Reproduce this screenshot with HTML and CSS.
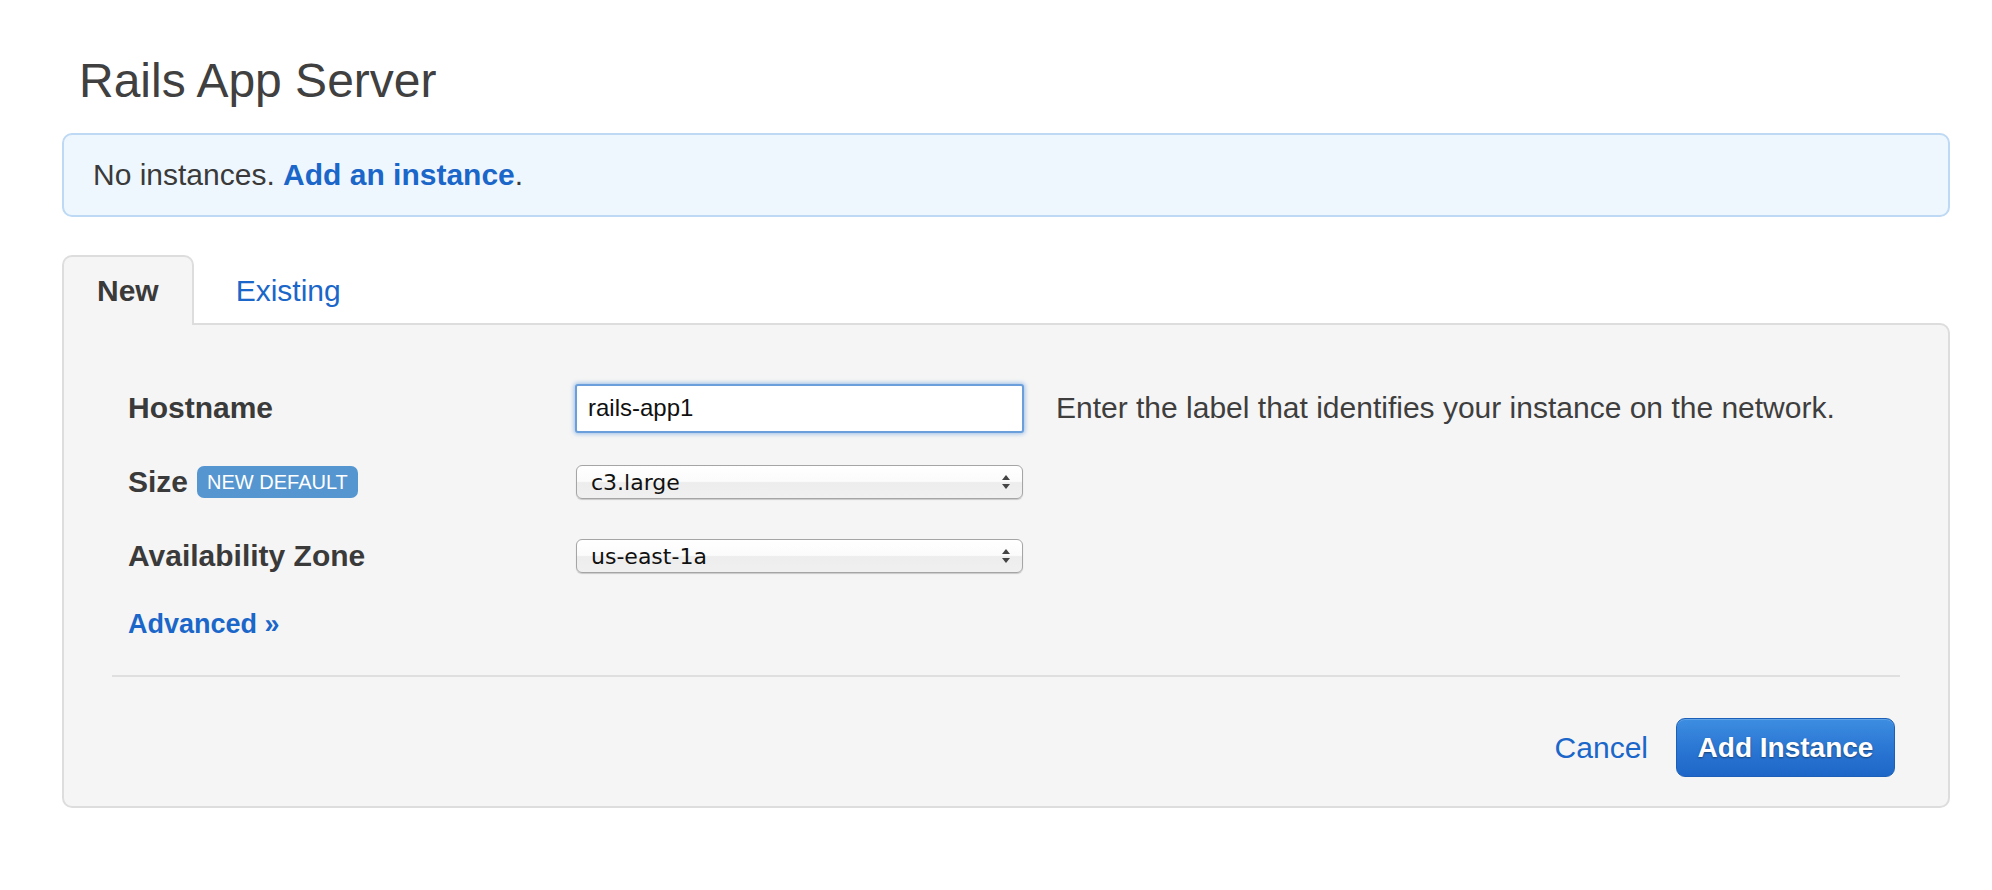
FILE: index.html
```html
<!DOCTYPE html>
<html>
<head>
<meta charset="utf-8">
<title>Rails App Server</title>
<link rel="stylesheet" href="styles.css">
</head>
<body>
<div class="page">
  <h1 class="title">Rails App Server</h1>
  <div class="alert">No instances. <a class="link strong" href="#">Add an instance</a>.</div>
  <div class="tabs">
    <div class="tab active">New</div>
    <div class="tab"><a class="link" href="#">Existing</a></div>
  </div>
  <div class="panel">
    <form class="form">
      <div class="row">
        <label class="label">Hostname</label>
        <input class="input" type="text" value="rails-app1">
        <span class="help">Enter the label that identifies your instance on the network.</span>
      </div>
      <div class="row">
        <label class="label">Size <span class="badge">NEW DEFAULT</span></label>
        <div class="select-wrap">
          <select class="select"><option>c3.large</option></select>
          <svg class="arrows" width="10" height="16" viewBox="0 0 10 16"><path d="M5 1 L9 6 L1 6 Z" fill="#444"/><path d="M1 10 L9 10 L5 15 Z" fill="#444"/></svg>
        </div>
      </div>
      <div class="row">
        <label class="label">Availability Zone</label>
        <div class="select-wrap">
          <select class="select"><option>us-east-1a</option></select>
          <svg class="arrows" width="10" height="16" viewBox="0 0 10 16"><path d="M5 1 L9 6 L1 6 Z" fill="#444"/><path d="M1 10 L9 10 L5 15 Z" fill="#444"/></svg>
        </div>
      </div>
      <a class="advanced link strong" href="#">Advanced »</a>
    </form>
    <div class="divider"></div>
    <div class="footer">
      <a class="cancel link" href="#">Cancel</a>
      <button class="btn" type="button">Add Instance</button>
    </div>
  </div>
</div>
</body>
</html>
```
FILE: styles.css
```css
html, body {
  margin: 0;
  padding: 0;
  background: #ffffff;
}

body {
  font-family: "Liberation Sans", Arial, sans-serif;
  color: #3e3e3e;
}

.page {
  padding: 0 42px 0 62px;
}

.title {
  margin: 55px 0 0 0;
  padding-left: 17px;
  font-size: 48px;
  line-height: 52px;
  font-weight: normal;
  color: #404040;
}

.link {
  color: #1b66c9;
  text-decoration: none;
}

.strong {
  font-weight: bold;
}

.alert {
  margin-top: 26px;
  height: 36px;
  padding: 22px 29px;
  border: 2px solid #bdd9f3;
  border-radius: 10px;
  background: #eff7fe;
  font-size: 30px;
  line-height: 36px;
  color: #3a3a3a;
}

.tabs {
  margin-top: 38px;
  display: flex;
  gap: 7px;
  align-items: flex-start;
}

.tab {
  position: relative;
  z-index: 1;
  padding: 16px 33px 16px 33px;
  border: 2px solid transparent;
  border-bottom: none;
  font-size: 30px;
  line-height: 36px;
  margin-bottom: -2px;
}

.tab.active {
  background: #f5f5f5;
  border-color: #dddddd;
  border-radius: 10px 10px 0 0;
  font-weight: bold;
  color: #3a3a3a;
}

.panel {
  border: 2px solid #dddddd;
  border-radius: 0 10px 10px 10px;
  background: #f5f5f5;
  padding: 58px 48px 29px 48px;
}

.form {
  display: flex;
  flex-direction: column;
  gap: 24px;
  padding-left: 16px;
}

.row {
  display: grid;
  grid-template-columns: 415px 449px auto;
  column-gap: 32px;
  align-items: center;
  height: 50px;
}

.label {
  display: flex;
  align-items: center;
  font-size: 30px;
  line-height: 36px;
  font-weight: bold;
  color: #3a3a3a;
}

.badge {
  margin-left: 9px;
  height: 32px;
  padding: 0 10px;
  border-radius: 7px;
  background: #5596d0;
  color: #ffffff;
  font-size: 20px;
  line-height: 32px;
  font-weight: normal;
}

.input {
  box-sizing: border-box;
  width: 449px;
  height: 49px;
  margin: 0;
  padding: 0 11px;
  border: 2px solid #6a9fdc;
  border-radius: 3px;
  box-shadow: 0 0 4px 1px rgba(82, 145, 220, 0.55);
  background: #ffffff;
  font-family: "Liberation Sans", Arial, sans-serif;
  font-size: 24px;
  color: #111111;
  outline: none;
}

.help {
  font-size: 30px;
  line-height: 36px;
  color: #3e3e3e;
  white-space: nowrap;
}

.select-wrap {
  position: relative;
  width: 447px;
  margin-left: 1px;
  height: 34px;
}

.select {
  -webkit-appearance: none;
  appearance: none;
  box-sizing: border-box;
  width: 100%;
  height: 34px;
  margin: 0;
  padding: 0 14px;
  border: 1px solid #a5a5a5;
  border-radius: 6px;
  background: linear-gradient(#ffffff 0%, #fbfbfb 48%, #ededed 52%, #f0f0f0 100%);
  box-shadow: 0 1px 1px rgba(0, 0, 0, 0.18);
  font-family: "DejaVu Sans", Verdana, sans-serif;
  font-size: 22px;
  color: #111111;
  outline: none;
}

.arrows {
  position: absolute;
  right: 12px;
  top: 9px;
  pointer-events: none;
}

.advanced {
  display: block;
  margin-top: 1px;
  font-size: 27px;
  line-height: 36px;
  align-self: flex-start;
}

.divider {
  margin-top: 33px;
  height: 2px;
  background: #dfdfdf;
}

.footer {
  margin-top: 41px;
  display: flex;
  justify-content: flex-end;
  align-items: center;
  gap: 28px;
  padding-right: 5px;
}

.cancel {
  font-size: 30px;
  line-height: 36px;
}

.btn {
  box-sizing: border-box;
  width: 219px;
  height: 59px;
  margin: 0;
  padding: 0;
  border: 1px solid #1c5fb8;
  border-radius: 9px;
  background: linear-gradient(#3d8ee1 0%, #2b77d4 50%, #1e67c8 100%);
  box-shadow: inset 0 1px 0 rgba(255, 255, 255, 0.2);
  color: #ffffff;
  font-family: "Liberation Sans", Arial, sans-serif;
  font-size: 28px;
  font-weight: bold;
  text-shadow: 0 1px 2px rgba(0, 0, 0, 0.45);
}
```
